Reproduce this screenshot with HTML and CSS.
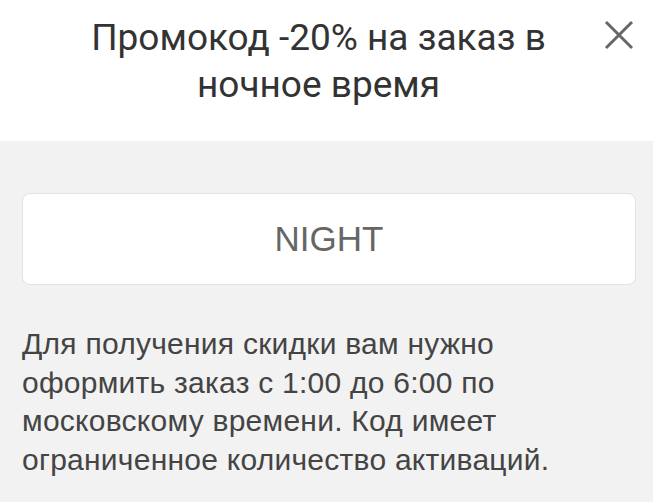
FILE: index.html
```html
<!DOCTYPE html>
<html lang="ru">
<head>
<meta charset="utf-8">
<link rel="stylesheet" href="styles.css">
</head>
<body>
<div class="sheet">
  <header class="head">
    <h1 class="title">Промокод -20% на заказ в ночное время</h1>
    <button class="close" aria-label="Закрыть">
      <svg width="30" height="30" viewBox="0 0 30 30"><path d="M2 2 L28 28 M28 2 L2 28" stroke="#666" stroke-width="3" fill="none"/></svg>
    </button>
  </header>
  <main class="content">
    <div class="code">NIGHT</div>
    <p class="desc">Для получения скидки вам нужно оформить заказ с 1:00 до 6:00 по московскому времени. Код имеет ограниченное количество активаций.</p>
  </main>
</div>
</body>
</html>
```
FILE: styles.css
```css
html, body {
  margin: 0;
  padding: 0;
  background: #f2f2f2;
}
.sheet {
  width: 653px;
  height: 502px;
  overflow: hidden;
  background: #f2f2f2;
}
.head {
  position: relative;
  background: #fff;
  height: 141px;
  box-sizing: border-box;
  padding: 14px 88px 0 72px;
}
.title {
  margin: 0;
  font-family: Roboto, "Noto Sans", sans-serif;
  font-weight: 400;
  font-size: 37px;
  line-height: 47px;
  color: #333;
  text-align: center;
}
.close {
  position: absolute;
  top: 20px;
  right: 19px;
  width: 30px;
  height: 30px;
  padding: 0;
  border: 0;
  background: none;
}
.close svg { display: block; }
.content {
  padding: 52px 17px 0 22px;
}
.code {
  height: 90px;
  background: #fff;
  border: 1px solid #e2e2e2;
  border-radius: 8px;
  display: flex;
  align-items: center;
  justify-content: center;
  font-family: "Liberation Sans", Arial, sans-serif;
  font-size: 35px;
  color: #666;
}
.desc {
  margin: 40px 50px 0 0;
  font-family: "Liberation Sans", Arial, sans-serif;
  font-size: 30px;
  letter-spacing: 0.25px;
  line-height: 38.5px;
  color: #444;
}
```
